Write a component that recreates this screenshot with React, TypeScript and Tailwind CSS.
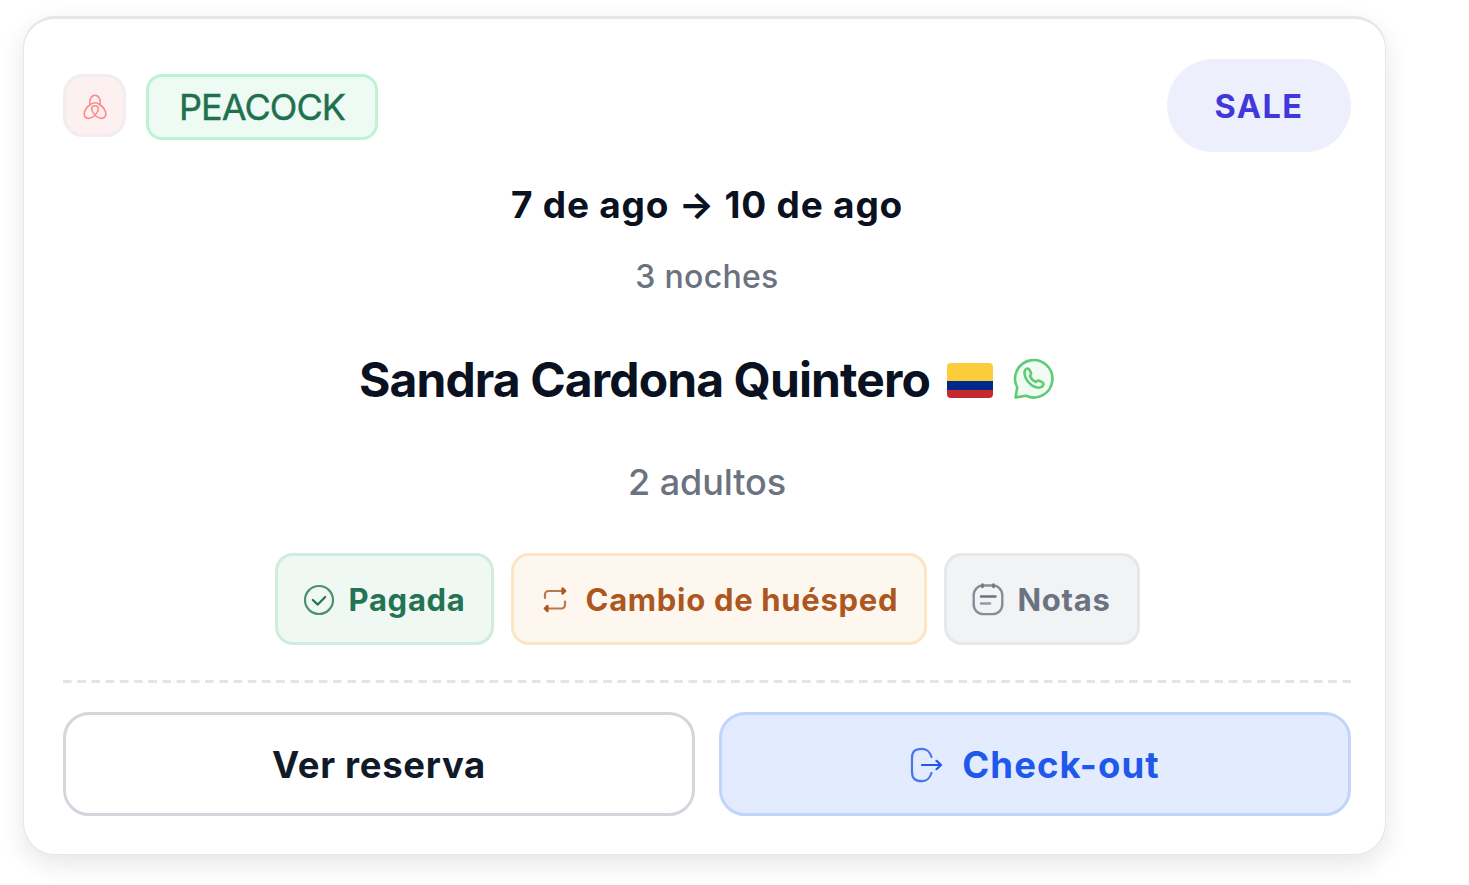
import React from 'react';

interface IconProps {
  className?: string;
}

/** Logo Airbnb : trois boucles en trait fin */
const AirbnbIcon: React.FC<IconProps> = ({ className = '' }) => (
  <svg viewBox="0 0 24 26" fill="none" stroke="currentColor" strokeWidth="1.6" strokeLinecap="round" strokeLinejoin="round" className={className}>
    <path d="M7 11C5.800 6 8.200 1.300 12 1.300S18.200 6 17 11c-1-1.300-2.800-2.200-5-2.200S8 9.700 7 11Z" />
    <path d="M7 11C4 12.500 1.200 16.500 1.200 19.800c0 2.800 1.900 4.600 4.600 4.600 3.700 0 9.500-5.400 9.500-9.400 0-2-1.300-3.300-3.300-3.300S8.700 13 8.700 15c0 4 5.800 9.400 9.500 9.400 2.700 0 4.600-1.800 4.600-4.600 0-3.300-2.800-7.300-5.800-8.800" />
  </svg>
);

const WhatsappIcon: React.FC<IconProps> = ({ className = '' }) => (
  <svg viewBox="0 0 42 42" fill="none" stroke="currentColor" strokeWidth="2.6" strokeLinecap="round" strokeLinejoin="round" className={className}>
    <path d="M2.500 39.500l1.700-10A18.700 18.700 0 1 1 13 37.800L2.500 39.500Z" fill="#f0fbf2" />
    <path d="M11.500 14.500c0-2.200 1.600-4 3.200-4 .9 0 1.400.5 1.800 1.300l1.600 3.300c.4 1-.5 2-1.200 3 1 2.300 3.500 4.900 5.900 5.900.9-.8 2.100-1.800 3.100-1.400l3.600 1.800c.8.4 1.200 1 1 1.900-.5 2-2.600 3.400-4.700 3.400-6.700 0-14.300-7.700-14.300-15.200Z" />
  </svg>
);

const CheckCircleIcon: React.FC<IconProps> = ({ className = '' }) => (
  <svg viewBox="0 0 32 32" fill="none" stroke="currentColor" strokeWidth="2.2" strokeLinecap="round" strokeLinejoin="round" className={className}>
    <circle cx="16" cy="16" r="14" opacity="0.8" />
    <path d="M9.800 16l5 4.600 7.400-7.600" />
  </svg>
);

const RepeatIcon: React.FC<IconProps> = ({ className = '' }) => (
  <svg viewBox="0 0 24 28" fill="none" stroke="currentColor" strokeWidth="2.2" strokeLinecap="round" strokeLinejoin="round" className={className}>
    <path d="M2 12V8.500a3.500 3.500 0 0 1 3.500-3.500H21" opacity="0.8" />
    <path d="M19.500 2.300L22.300 5l-2.800 2.700Z" fill="currentColor" />
    <path d="M22 15.500V19a3.500 3.500 0 0 1-3.500 3.500H3" opacity="0.8" />
    <path d="M4.500 19.800l-2.800 2.700 2.800 2.700Z" fill="currentColor" />
  </svg>
);

const NoteIcon: React.FC<IconProps> = ({ className = '' }) => (
  <svg viewBox="0 0 32 34" fill="none" stroke="currentColor" strokeWidth="2.4" strokeLinecap="round" strokeLinejoin="round" className={className}>
    <rect x="1.700" y="3.500" width="28.600" height="28.600" rx="9.500" opacity="0.8" />
    <path d="M10.500 2.500v2.500M21.500 2.500v2.500" />
    <path d="M9 14.500h14.500" />
    <path d="M9 21.500h9" opacity="0.7" />
  </svg>
);

const LogoutIcon: React.FC<IconProps> = ({ className = '' }) => (
  <svg viewBox="0 0 34 36" fill="none" stroke="currentColor" strokeWidth="2.2" strokeLinecap="round" strokeLinejoin="round" className={className}>
    <path d="M21.500 10C19.500 4 17 1.800 11.500 1.800 4.800 1.800 2 4.800 2 11v14c0 6.200 2.800 9.200 9.500 9.200 5.500 0 8-2.200 10-8.200" opacity="0.8" />
    <path d="M12 18h18" />
    <path d="M26.500 13.800L31 18l-4.500 4.200" />
  </svg>
);

/** Drapeau colombien */
const ColombiaFlag: React.FC = () => (
  <span className="flex h-[35px] w-[46px] flex-col overflow-hidden rounded-[4px]">
    <span className="h-[18px] bg-[#fbcd3b]" />
    <span className="h-[9px] bg-[#00298c]" />
    <span className="h-[8px] bg-[#c6292d]" />
  </span>
);

interface ChipProps {
  icon: React.ReactNode;
  label: string;
  className?: string;
}

const Chip: React.FC<ChipProps> = ({ icon, label, className = '' }) => (
  <div className={`flex h-[92px] items-center rounded-[18px] border-[3px] pt-0.5 text-[31px] font-bold tracking-[0.7px] ${className}`}>
    {icon}
    <span>{label}</span>
  </div>
);

const App: React.FC = () => {
  return (
    <div className="h-[885px] w-[1469px] overflow-hidden bg-white pt-4 pl-[23px] font-['Inter',sans-serif] whitespace-nowrap">
      <div className="flex h-[839px] w-[1363px] flex-col rounded-[32px] border border-t-[3px] border-[#e5e6eb] bg-white pt-[40px] pr-[34px] pl-[39px] shadow-[0_9px_26px_rgba(0,0,0,0.1)]">
        <div className="flex h-[93px] items-center">
          <div className="flex size-[63px] items-center justify-center rounded-[20px] border-[3px] border-[#f1edf0] bg-[#fdf0f0] text-[#fb8a89]">
            <AirbnbIcon className="mt-0.5 h-[26px] w-6" />
          </div>
          <div className="mt-[3px] ml-5 flex h-[66px] w-[232px] items-center justify-center rounded-2xl border-[3px] border-[#bbf3d4] bg-[#eefbf5] text-[36px] tracking-[-0.9px] text-[#20704f] [-webkit-text-stroke:0.4px_#20704f]">
            PEACOCK
          </div>
          <div className="ml-auto flex h-[93px] w-[184px] items-center justify-center rounded-full bg-[#eeeffd] pt-[3px] text-[32.5px] font-bold tracking-[1.4px] text-[#4038d9]">
            SALE
          </div>
        </div>

        <p className="mt-[23px] text-center text-[37px] leading-[60px] font-bold tracking-[0.8px] text-[#0a1120]">7 de ago → 10 de ago</p>
        <p className="mt-[22px] text-center text-[32px] leading-[40px] font-medium tracking-[0.3px] text-[#6b7280]">3 noches</p>

        <div className="mt-[53px] flex h-[60px] items-center justify-center">
          <h2 className="text-[48px] leading-[60px] font-bold tracking-[-0.9px] text-[#0a1120]">Sandra Cardona Quintero</h2>
          <div className="ml-[17px]">
            <ColombiaFlag />
          </div>
          <WhatsappIcon className="-mt-0.5 ml-5 size-[42px] text-[#5fcb74]" />
        </div>

        <p className="mt-[47px] text-center text-[36px] leading-[50px] font-medium tracking-[-0.1px] text-[#6b7280]">2 adultos</p>

        <div className="mt-[46px] flex justify-center gap-[17px]">
          <Chip
            label="Pagada"
            icon={<CheckCircleIcon className="mr-3.5 size-8" />}
            className="w-[219px] border-[#cfecdf] bg-[#f0f8f4] pl-[25px] text-[#267354]"
          />
          <Chip
            label="Cambio de huésped"
            icon={<RepeatIcon className="mr-[19px] h-7 w-6" />}
            className="w-[416px] border-[#fbe5c4] bg-[#fdf7f0] pl-[29px] text-[#ad571f]"
          />
          <Chip
            label="Notas"
            icon={<NoteIcon className="mr-3.5 -mt-0.5 h-[34px] w-8" />}
            className="w-[196px] border-[#e5e7eb] bg-[#f2f3f5] pl-[25px] text-[#6b7280]"
          />
        </div>

        <svg className="mt-[35px] h-[3px] w-full shrink-0" viewBox="0 0 1288 3" preserveAspectRatio="none">
          <path d="M0 1.500h1288" stroke="#e3e4e8" strokeWidth="3" strokeDasharray="8.600 5.615" />
        </svg>

        <div className="mt-[29px] flex gap-6">
          <button className="h-[104px] flex-1 rounded-[26px] border-[3px] border-[#d3d6dc] bg-white pt-0.5 text-[36.5px] font-bold tracking-[0.7px] text-[#111a29]">
            Ver reserva
          </button>
          <button className="flex h-[104px] flex-1 items-center justify-center rounded-[26px] border-[3px] border-[#c1d4fb] bg-[#e3ebfe] pt-0.5 text-[36.5px] font-bold tracking-[1.1px] text-[#2158ec]">
            <LogoutIcon className="mr-[18px] h-9 w-[34px]" />
            Check-out
          </button>
        </div>
      </div>
    </div>
  );
};

export default App;
